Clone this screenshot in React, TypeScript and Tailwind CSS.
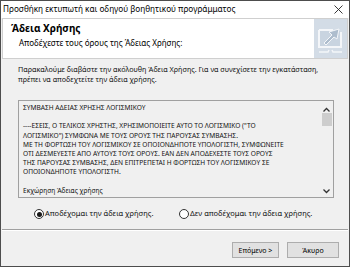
import React from "react";

const font = { fontFamily: '"Noto Sans", "Liberation Sans", sans-serif' };

function WizardIcon() {
  return (
    <svg width="33" height="39" viewBox="0 0 33 39">
      <rect x="0" y="0" width="33" height="39" fill="#d3dce6" />
      <path d="M5 11 H19 M27 13 V28 H5 V11" fill="none" stroke="#f4f6f9" strokeWidth="2" />
      <rect x="6" y="12" width="20" height="15" fill="#c9d4e0" />
      <path d="M10 24 L18 16 L15 13 L25 10 L23 20 L20 18 L12 26 Z" fill="#aebdcd" stroke="#f4f6f9" strokeWidth="1" />
      <path d="M5 33 H14 L15 31 M18 31 L19 33 H28" stroke="#f4f6f9" strokeWidth="1.5" fill="none" />
    </svg>
  );
}

function Radio({ checked, label }: { checked?: boolean; label: string }) {
  return (
    <div className="flex items-center gap-[1px] h-[12px]">
      <div className="w-[10px] h-[10px] rounded-full border border-[#333] bg-white flex items-center justify-center">
        {checked && <div className="w-[5px] h-[5px] rounded-full bg-[#1a1a1a]" />}
      </div>
      <span className="text-[7.5px] leading-none text-[#111] whitespace-nowrap">{label}</span>
    </div>
  );
}

export default function App() {
  const lines = [
    "ΣΥΜΒΑΣΗ ΑΔΕΙΑΣ ΧΡΗΣΗΣ ΛΟΓΙΣΜΙΚΟΥ",
    "",
    '----ΕΣΕΙΣ, Ο ΤΕΛΙΚΟΣ ΧΡΗΣΤΗΣ, ΧΡΗΣΙΜΟΠΟΙΕΙΤΕ ΑΥΤΟ ΤΟ ΛΟΓΙΣΜΙΚΟ ("ΤΟ',
    'ΛΟΓΙΣΜΙΚΟ") ΣΥΜΦΩΝΑ ΜΕ ΤΟΥΣ ΟΡΟΥΣ ΤΗΣ ΠΑΡΟΥΣΑΣ ΣΥΜΒΑΣΗΣ.',
    "ΜΕ ΤΗ ΦΟΡΤΩΣΗ ΤΟΥ ΛΟΓΙΣΜΙΚΟΥ ΣΕ ΟΠΟΙΟΝΔΗΠΟΤΕ ΥΠΟΛΟΓΙΣΤΗ, ΣΥΜΦΩΝΕΙΤΕ",
    "ΟΤΙ ΔΕΣΜΕΥΕΣΤΕ ΑΠΟ ΑΥΤΟΥΣ ΤΟΥΣ ΟΡΟΥΣ. ΕΑΝ ΔΕΝ ΑΠΟΔΕΧΕΣΤΕ ΤΟΥΣ ΟΡΟΥΣ",
    "ΤΗΣ ΠΑΡΟΥΣΑΣ ΣΥΜΒΑΣΗΣ, ΔΕΝ ΕΠΙΤΡΕΠΕΤΑΙ Η ΦΟΡΤΩΣΗ ΤΟΥ ΛΟΓΙΣΜΙΚΟΥ ΣΕ",
    "ΟΠΟΙΟΝΔΗΠΟΤΕ ΥΠΟΛΟΓΙΣΤΗ.",
    "",
    "Εκχώρηση Άδειας χρήσης",
  ];
  return (
    <div
      className="w-[350px] h-[267px] border border-[#4d4d4d] bg-[#f0f0f0] flex flex-col overflow-hidden text-[#000]"
      style={font}
    >
      {/* title bar */}
      <div className="h-[17px] bg-white flex items-center justify-between pl-[2px] pr-[6px] shrink-0">
        <span className="text-[8.2px] leading-none whitespace-nowrap">Προσθήκη εκτυπωτή και οδηγού βοηθητικού προγράμματος</span>
        <svg width="9" height="9" viewBox="0 0 9 9">
          <path d="M0.5 0.5 L8.5 8.5 M8.5 0.5 L0.5 8.5" stroke="#222" strokeWidth="0.9" />
        </svg>
      </div>
      {/* body */}
      <div className="flex-1 flex flex-col px-[1px]">
        {/* header */}
        <div className="h-[41px] bg-white border border-[#cfcfcf] flex justify-between shrink-0">
          <div className="flex flex-col pl-[8px] pt-[3px]">
            <span className="text-[10px] font-bold leading-[12px] whitespace-nowrap">Άδεια Χρήσης</span>
            <span className="text-[8px] leading-[10px] pl-[8px] mt-[4px] whitespace-nowrap">Αποδέχεστε τους όρους της Άδειας Χρήσης:</span>
          </div>
          <WizardIcon />
        </div>
        {/* content */}
        <div className="flex flex-col px-[16px] pt-[5px]">
          <p className="text-[7.2px] leading-[10px] text-[#111] whitespace-nowrap">
            Παρακαλούμε διαβάστε την ακόλουθη Άδεια Χρήσης. Για να συνεχίσετε την εγκατάσταση,
            <br />
            πρέπει να αποδεχτείτε την άδεια χρήσης.
          </p>
          <div className="mt-[16px] h-[98px] w-[316px] border border-[#a0a0a0] bg-[#f0f0f0] flex">
            <div className="flex-1 pl-[4px] pt-[2px]">
              {lines.map((l, i) => (
                <div key={i} className="text-[6.6px] leading-[9.2px] h-[9.2px] whitespace-nowrap text-[#111]">
                  {l}
                </div>
              ))}
            </div>
            <div className="w-[13px] flex flex-col items-center bg-[#f0f0f0]">
              <div className="h-[12px] flex items-end justify-center pb-[1px]">
                <svg width="7" height="5" viewBox="0 0 7 5"><path d="M0.5 4.5 L3.5 1.5 L6.5 4.5" stroke="#333" strokeWidth="1.3" fill="none" /></svg>
              </div>
              <div className="w-[10px] h-[13px] bg-[#cdcdcd]" />
              <div className="flex-1" />
              <div className="h-[12px] flex items-center justify-center">
                <svg width="7" height="5" viewBox="0 0 7 5"><path d="M0.5 0.5 L3.5 3.5 L6.5 0.5" stroke="#333" strokeWidth="1.3" fill="none" /></svg>
              </div>
            </div>
          </div>
          <div className="flex mt-[10px] pl-[16px]">
            <div className="w-[145px]">
              <Radio checked label="Αποδέχομαι την άδεια χρήσης." />
            </div>
            <Radio label="Δεν αποδέχομαι την άδεια χρήσης." />
          </div>
        </div>
        <div className="mt-[9px] border-t border-[#a0a0a0] border-b border-b-white" />
        <div className="flex justify-end gap-[8px] pr-[9px] pt-[11px]">
          <button className="w-[47px] h-[16px] bg-[#e1e1e1] border border-[#adadad] text-[7px] leading-none whitespace-nowrap">Επόμενο &gt;</button>
          <button className="w-[52px] h-[16px] bg-[#e1e1e1] border border-[#adadad] text-[7px] leading-none whitespace-nowrap">Άκυρο</button>
        </div>
      </div>
    </div>
  );
}
